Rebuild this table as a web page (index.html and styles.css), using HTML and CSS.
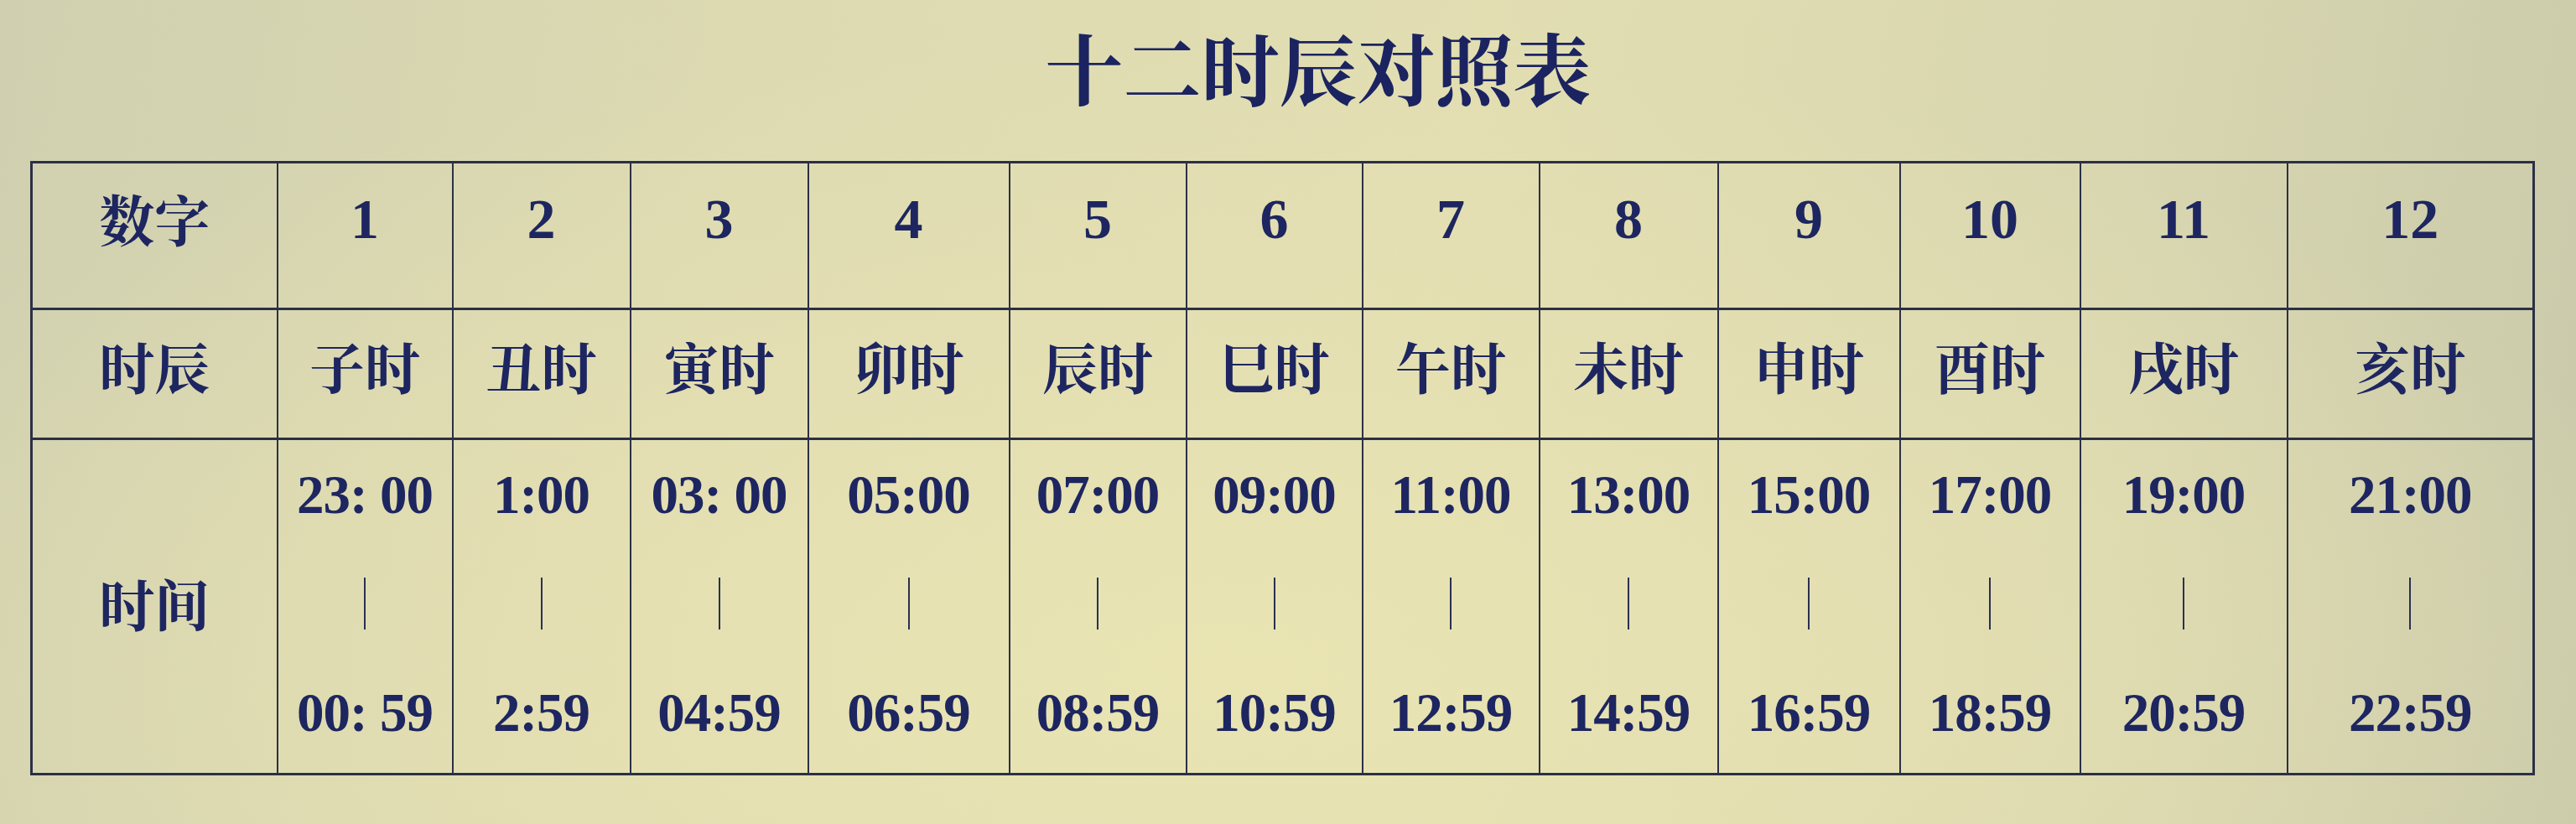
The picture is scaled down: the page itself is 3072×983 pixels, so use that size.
FILE: index.html
```html
<!DOCTYPE html>
<html lang="zh-CN">
<head>
<meta charset="utf-8">
<title>十二时辰对照表</title>
<link rel="stylesheet" href="styles.css">
</head>
<body>
<div class="sheet">
  <h1 class="title">十二时辰对照表</h1>
  <table class="chart">
    <colgroup>
      <col style="width:293px"><col style="width:209px"><col style="width:212px"><col style="width:212px"><col style="width:240px"><col style="width:211px"><col style="width:210px"><col style="width:211px"><col style="width:213px"><col style="width:217px"><col style="width:215px"><col style="width:247px"><col style="width:294px">
    </colgroup>
    <tr class="row-num">
      <th class="label">数字</th>
      <td class="num">1</td><td class="num">2</td><td class="num">3</td><td class="num">4</td><td class="num">5</td><td class="num">6</td><td class="num">7</td><td class="num">8</td><td class="num">9</td><td class="num">10</td><td class="num">11</td><td class="num">12</td>
    </tr>
    <tr class="row-name">
      <th class="label">时辰</th>
      <td class="cn">子时</td><td class="cn">丑时</td><td class="cn">寅时</td><td class="cn">卯时</td><td class="cn">辰时</td><td class="cn">巳时</td><td class="cn">午时</td><td class="cn">未时</td><td class="cn">申时</td><td class="cn">酉时</td><td class="cn">戌时</td><td class="cn">亥时</td>
    </tr>
    <tr class="row-time">
      <th class="label">时间</th>
      <td><div class="span"><span class="t">23: 00</span><span class="bar"></span><span class="t">00: 59</span></div></td>
      <td><div class="span"><span class="t">1:00</span><span class="bar"></span><span class="t">2:59</span></div></td>
      <td><div class="span"><span class="t">03: 00</span><span class="bar"></span><span class="t">04:59</span></div></td>
      <td><div class="span"><span class="t">05:00</span><span class="bar"></span><span class="t">06:59</span></div></td>
      <td><div class="span"><span class="t">07:00</span><span class="bar"></span><span class="t">08:59</span></div></td>
      <td><div class="span"><span class="t">09:00</span><span class="bar"></span><span class="t">10:59</span></div></td>
      <td><div class="span"><span class="t">11:00</span><span class="bar"></span><span class="t">12:59</span></div></td>
      <td><div class="span"><span class="t">13:00</span><span class="bar"></span><span class="t">14:59</span></div></td>
      <td><div class="span"><span class="t">15:00</span><span class="bar"></span><span class="t">16:59</span></div></td>
      <td><div class="span"><span class="t">17:00</span><span class="bar"></span><span class="t">18:59</span></div></td>
      <td><div class="span"><span class="t">19:00</span><span class="bar"></span><span class="t">20:59</span></div></td>
      <td><div class="span"><span class="t">21:00</span><span class="bar"></span><span class="t">22:59</span></div></td>
    </tr>
  </table>
</div>
</body>
</html>
```
FILE: styles.css
```css
html, body {
  margin: 0;
  padding: 0;
}
body {
  width: 3072px;
  height: 983px;
  overflow: hidden;
  background:
    radial-gradient(ellipse 1800px 750px at 1450px 800px, rgba(233,228,178,1) 0%, rgba(230,225,178,0.75) 45%, rgba(230,225,178,0) 100%),
    linear-gradient(100deg, #d0d0b0 0%, #dddab2 28%, #e2deb2 55%, #d8d6b0 80%, #c9c9aa 100%);
  color: #1d2660;
}
.sheet {
  display: flex;
  flex-direction: column;
  padding: 0 0 0 36px;
}
.title {
  margin: 0;
  height: 192px;
  display: flex;
  align-items: flex-start;
  justify-content: center;
  padding: 33px 0 0 88px;
  box-sizing: border-box;
  width: 2984px;
  font-family: "Noto Serif CJK SC", "Noto Sans CJK SC", serif;
  font-weight: 700;
  font-size: 93px;
  line-height: 1;
  color: #1b2460;
}
.chart {
  border-collapse: collapse;
  table-layout: fixed;
  width: 2984px;
  border: 3px solid #2b3046;
}
.chart th, .chart td {
  border-left: 2px solid #2b3046;
  border-right: 2px solid #2b3046;
  border-top: 3px solid #2b3046;
  border-bottom: 3px solid #2b3046;
  padding: 0;
  text-align: center;
  color: #1d2660;
}
.label, .cn {
  font-family: "Noto Serif CJK SC", "Noto Sans CJK SC", serif;
  font-weight: 700;
  font-size: 66px;
  line-height: 1;
}
.num, .t {
  font-family: "Liberation Serif", "Times New Roman", serif;
  font-weight: 700;
  font-size: 68px;
  line-height: 1;
}
.row-num th, .row-num td {
  height: 175px;
  vertical-align: top;
  padding-top: 32px;
  box-sizing: border-box;
}
.row-name th, .row-name td {
  height: 155px;
  vertical-align: top;
  padding-top: 33px;
  box-sizing: border-box;
}
.row-time th, .row-time td {
  height: 400px;
  box-sizing: border-box;
}
.row-time th {
  vertical-align: middle;
  padding-bottom: 10px;
}
.row-time td {
  vertical-align: top;
}
.span {
  display: flex;
  flex-direction: column;
  align-items: center;
}
.t {
  height: 130px;
  display: flex;
  align-items: center;
  justify-content: center;
  font-size: 65px;
  letter-spacing: -1px;
  white-space: pre;
}
.bar {
  height: 130px;
  width: 2px;
}
.bar::before {
  content: "";
  display: block;
  width: 2px;
  height: 62px;
  margin-top: 34px;
  background: #2a3052;
}
```
